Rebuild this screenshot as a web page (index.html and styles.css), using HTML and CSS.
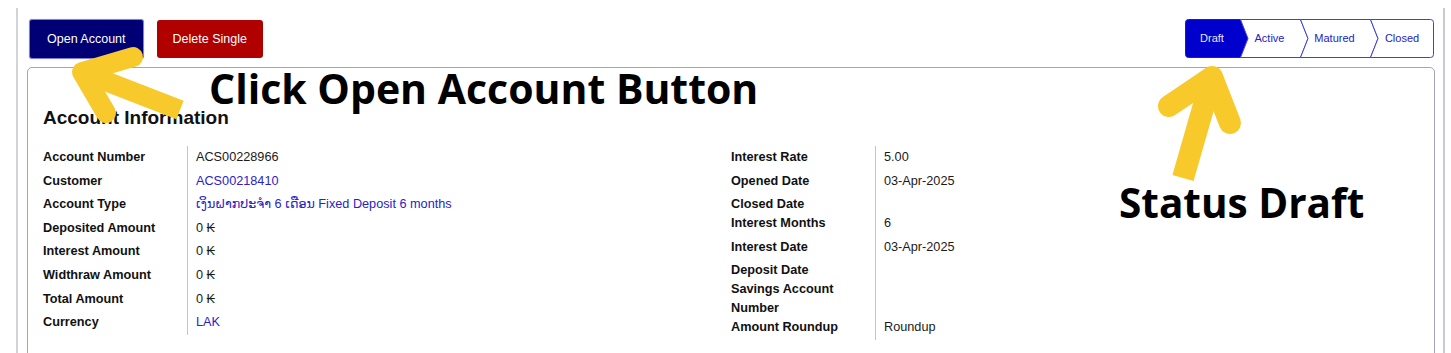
FILE: index.html
```html
<!DOCTYPE html>
<html lang="en">
<head>
  <meta charset="UTF-8">
  <meta name="viewport" content="width=device-width, initial-scale=1.0">
  <title>Account</title>
  <link rel="stylesheet" href="styles.css">
</head>
<body>

  <div class="page">
    <div class="toolbar">
      <div class="actions">
        <button class="btn btn-primary">Open Account</button>
        <button class="btn btn-danger">Delete Single</button>
      </div>
      <svg class="statusbar" width="250" height="39" viewBox="0 0 250 39">
        <path class="step step-current" d="M3.5,0.5 H55.5 L63,19.5 L55.5,38.5 H3.5 Q0.5,38.5 0.5,35.5 V3.5 Q0.5,0.5 3.5,0.5 Z"/>
        <path class="step" d="M55.5,0.5 H115.5 L123,19.5 L115.5,38.5 H55.5 L63,19.5 Z"/>
        <path class="step" d="M115.5,0.5 H185.5 L193,19.5 L185.5,38.5 H115.5 L123,19.5 Z"/>
        <path class="step" d="M185.5,0.5 H245.5 Q248.5,0.5 248.5,3.5 V35.5 Q248.5,38.5 245.5,38.5 H185.5 L193,19.5 Z"/>
        <text class="step-label step-label-current" x="27" y="23">Draft</text>
        <text class="step-label" x="84.5" y="23">Active</text>
        <text class="step-label" x="149.5" y="23">Matured</text>
        <text class="step-label" x="217" y="23">Closed</text>
      </svg>
    </div>

    <div class="card">
      <h2>Account Information</h2>
      <div class="info">
        <div class="fields">
          <div class="label">Account Number</div>
          <div class="value">ACS00228966</div>
          <div class="label">Customer</div>
          <div class="value link">ACS00218410</div>
          <div class="label">Account Type</div>
          <div class="value link">ເງິນຝາກປະຈຳ 6 ເດືອນ Fixed Deposit 6 months</div>
          <div class="label">Deposited Amount</div>
          <div class="value">0 ₭</div>
          <div class="label">Interest Amount</div>
          <div class="value">0 ₭</div>
          <div class="label">Widthraw Amount</div>
          <div class="value">0 ₭</div>
          <div class="label">Total Amount</div>
          <div class="value">0 ₭</div>
          <div class="label">Currency</div>
          <div class="value link">LAK</div>
        </div>
        <div class="fields">
          <div class="label">Interest Rate</div>
          <div class="value">5.00</div>
          <div class="label">Opened Date</div>
          <div class="value">03-Apr-2025</div>
          <div class="label">Closed Date</div>
          <div class="value empty"></div>
          <div class="label">Interest Months</div>
          <div class="value">6</div>
          <div class="label">Interest Date</div>
          <div class="value">03-Apr-2025</div>
          <div class="label">Deposit Date</div>
          <div class="value empty"></div>
          <div class="label">Savings Account Number</div>
          <div class="value empty"></div>
          <div class="label">Amount Roundup</div>
          <div class="value">Roundup</div>
        </div>
      </div>
    </div>
  </div>

  <!-- tutorial callouts drawn over the page -->
  <div class="note note-open">Click Open Account Button</div>
  <div class="note note-status">Status Draft</div>
  <svg class="arrows" width="1451" height="353" viewBox="0 0 1451 353">
    <path class="shaft" stroke-width="20" d="M82,72 L180,110"/>
    <path class="head" stroke-width="20" d="M133,57 L82,72 L106,113"/>
    <path class="shaft" stroke-width="22" d="M1212,77 L1183,178"/>
    <path class="head" stroke-width="22" d="M1169,106 L1212,77 L1230,123"/>
  </svg>

</body>
</html>
```

FILE: styles.css
```css
body {
  margin: 0;
  font-family: "Liberation Sans", Arial, "DejaVu Sans", sans-serif;
  background-color: #fff;
  color: #111;
  position: relative;
  height: 100vh;
  overflow: hidden;
}

.page {
  margin: 8px 6px 0 16px;
  padding: 11px 8px 0 9px;
  min-height: calc(100vh - 8px);
  border-left: 2px solid #d3d3da;
  border-right: 2px solid #c9c9d3;
}

.toolbar {
  display: flex;
  justify-content: space-between;
  align-items: flex-start;
  margin-bottom: 8px;
}

.actions {
  display: flex;
  align-items: center;
  gap: 13px;
  padding-left: 2px;
}

.btn {
  font-family: inherit;
  font-size: 12.5px;
  color: #fff;
  border: none;
  border-radius: 3px;
  height: 38px;
  padding: 0 16px;
  cursor: pointer;
}

.btn-primary {
  background-color: #000074;
  height: 40px;
  padding: 0 17px;
  border: 1px solid #7d82d8;
  box-shadow: 0 0 1px #a6a9e6;
}

.btn-danger {
  background-color: #b00000;
}

.statusbar {
  display: block;
}

.step {
  fill: #fff;
  stroke: #4040d4;
  stroke-width: 1;
}

.step-current {
  fill: #0000cc;
  stroke: #1a1ad0;
}

.step-label {
  font-family: "Liberation Sans", Arial, sans-serif;
  font-size: 11px;
  fill: #2620c4;
  text-anchor: middle;
}

.step-label-current {
  fill: #e6e6ff;
}

.card {
  border: 1px solid #a4a4bf;
  border-radius: 5px;
  padding: 39px 15px 40px;
}

.card h2 {
  margin: 0 0 17px;
  font-size: 19px;
  line-height: 22px;
  font-weight: bold;
  color: #111;
}

.info {
  display: grid;
  grid-template-columns: 1fr 1fr;
}

.fields {
  display: grid;
  grid-template-columns: 144px 1fr;
  align-content: start;
  font-size: 12.7px;
}

.label {
  font-weight: bold;
  line-height: 19px;
  padding-top: 2px;
  margin-bottom: -2px;
  padding-right: 8px;
}

.value {
  height: 19.6px;
  line-height: 19px;
  padding: 2px 0 2px 8px;
  border-left: 1.5px solid #c4c4c4;
  color: #1a1a1a;
  white-space: nowrap;
  overflow: hidden;
}

.value.empty {
  height: auto;
  padding: 0;
}

.value.link {
  color: #2a22c6;
}

.note {
  position: absolute;
  font-family: "Open Sans", "Noto Sans", sans-serif;
  font-weight: 700;
  font-size: 41px;
  line-height: 1;
  color: #000;
  white-space: nowrap;
}

.note-open {
  left: 209px;
  top: 68px;
}

.note-status {
  left: 1119px;
  top: 183px;
  font-size: 40.5px;
}

.arrows {
  position: absolute;
  left: 0;
  top: 0;
  pointer-events: none;
}

.arrows path {
  fill: none;
  stroke: #f7c92b;
}

.arrows .shaft {
  stroke-linecap: butt;
}

.arrows .head {
  stroke-linecap: round;
  stroke-linejoin: round;
}
```
